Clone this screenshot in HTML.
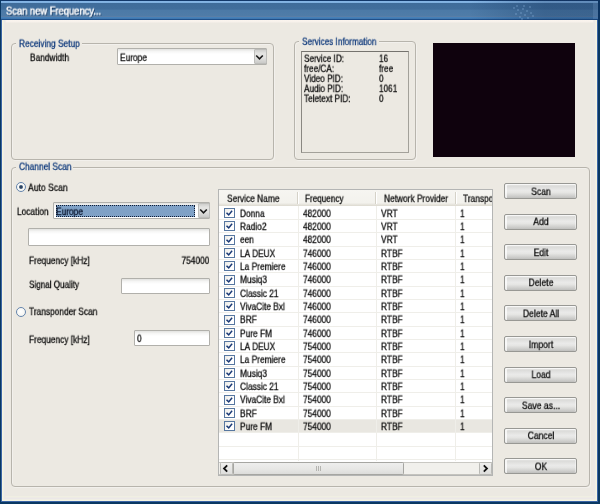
<!DOCTYPE html>
<html>
<head>
<meta charset="utf-8">
<title>Scan new Frequency...</title>
<style>
html,body{margin:0;padding:0;}
body{width:600px;height:504px;overflow:hidden;background:#ece9e2;font-family:"Liberation Sans",sans-serif;font-size:10px;color:#0c0c0c;position:relative;}
.abs,.t,.gb,.gl,.inp,.btn,.cb,.radio{position:absolute;box-sizing:border-box;}
.t{white-space:nowrap;line-height:12px;height:12px;font-size:10.0px;transform:scale(0.8350,0.93);will-change:transform;-webkit-text-stroke:0.3px currentColor;}
.gl{color:#0f3a7c;}
#frame{position:absolute;left:0;top:0;width:600px;height:504px;background:#0a3862;}
#frame2{position:absolute;left:1px;top:20px;width:597.3px;height:482.4px;background:#3b65a5;}
#titlebar{position:absolute;left:0;top:0;width:600px;height:20px;background:linear-gradient(to right,rgba(12,40,80,0) 0,rgba(12,40,80,0) 470px,rgba(12,40,80,0.28) 545px,rgba(12,40,80,0.28) 600px),linear-gradient(to bottom,#12386a 0,#12386a 0.8px,#86b6e6 1.1px,#7fb0e0 2.6px,#3f6c9a 3.3px,#416e9c 9px,#4c7aa7 10.5px,#4f7ca8 15.8px,#5a7ea6 16.5px,#4680b8 17.3px,#4680b8 18.4px,#20508a 19px,#20508a 20px);}
#tl{position:absolute;left:0;top:0;width:1.2px;height:20px;background:#0a3862;}
#tr{position:absolute;left:598.2px;top:0;width:1.8px;height:20px;background:#0a3260;}
#title{position:absolute;left:5.6px;top:5.6px;color:#fff;font-size:10px;font-weight:normal;-webkit-text-stroke:0.45px #fff;line-height:12px;white-space:nowrap;text-shadow:1px 1px 0 #102c52;transform:scale(0.936,1.04);transform-origin:0 9.5px;will-change:transform;}
#client{position:absolute;left:2.2px;top:20px;width:595.1px;height:481.4px;background:linear-gradient(to bottom,#faf4ee 0,#f7f1eb 2px,#ece9e2 3px);box-shadow:inset 1.6px 0 0 #f5f4e0,inset -1.6px 0 0 #f5f4e0,inset 0 -1.5px 0 #f5f4e2,inset 3.6px 0 0 #ebe8e7,inset -3.6px 0 0 #ebe8e7,inset 0 -3.5px 0 #ebe8e8,inset 0 -5px 0 #f0efe2;}
.gb{border:1px solid #b7b4ac;border-radius:4px;box-shadow:inset 1px 1px 0 rgba(255,255,255,.35),1px 1px 0 rgba(255,255,255,.35);}
.mask{background:#ece9e2;}
.inp{background:linear-gradient(to bottom,#e2e2e0 0,#f6f6f5 2.5px,#fff 5px);border:1px solid #b1b0ab;border-radius:1px;}
.btn{width:73px;height:16px;border:1px solid #989894;border-radius:2px;background:linear-gradient(to bottom,#e8e8e6 0,#dcdcda 16%,#eaeae9 45%,#e6e6e4 60%,#cfcfcd 85%,#bfbfbd 100%);box-shadow:inset 2px 1px 0 rgba(255,255,255,.7),inset -1px 0 0 rgba(255,255,255,.4);}
.radio{width:10px;height:10px;border-radius:50%;border:1.2px solid #6585ad;background:radial-gradient(circle at 45% 45%,#fff 0,#f6f6f3 60%,#e6e6e0 100%);}
.cb{width:10.6px;height:9.8px;border:1px solid #5777a0;background:linear-gradient(135deg,#ecebe6 0,#fff 65%);}
</style>
</head>
<body>
<div id="frame"></div>
<div id="frame2"></div>
<div id="titlebar"></div><div id="tl"></div><div id="tr"></div>
<div id="title">Scan new Frequency...</div>
<div id="client"></div>

<div class="abs" style="left:513px;top:7px;width:2px;height:2px;background:rgba(160,200,240,0.22);"></div>
<div class="abs" style="left:516px;top:5px;width:2px;height:2px;background:rgba(160,200,240,0.22);"></div>
<div class="abs" style="left:517px;top:9px;width:2px;height:2px;background:rgba(160,200,240,0.22);"></div>
<div class="abs" style="left:520px;top:12px;width:2px;height:2px;background:rgba(160,200,240,0.22);"></div>
<div class="abs" style="left:519px;top:16px;width:2px;height:2px;background:rgba(160,200,240,0.22);"></div>
<div class="abs" style="left:522px;top:8px;width:2px;height:2px;background:rgba(160,200,240,0.22);"></div>
<div class="abs" style="left:524px;top:14px;width:2px;height:2px;background:rgba(160,200,240,0.22);"></div>
<div class="abs" style="left:526px;top:10px;width:2px;height:2px;background:rgba(160,200,240,0.22);"></div>
<div class="abs" style="left:527px;top:17px;width:2px;height:2px;background:rgba(160,200,240,0.22);"></div>
<div class="abs" style="left:529px;top:6px;width:2px;height:2px;background:rgba(160,200,240,0.22);"></div>
<div class="abs" style="left:530px;top:12px;width:2px;height:2px;background:rgba(160,200,240,0.22);"></div>
<div class="abs" style="left:532px;top:15px;width:2px;height:2px;background:rgba(160,200,240,0.22);"></div>
<div class="abs" style="left:523px;top:5px;width:2px;height:2px;background:rgba(160,200,240,0.22);"></div>
<div class="abs" style="left:515px;top:13px;width:2px;height:2px;background:rgba(160,200,240,0.22);"></div>
<div class="abs" style="left:521px;top:18px;width:2px;height:2px;background:rgba(160,200,240,0.22);"></div>
<div class="abs" style="left:592.6px;top:3px;width:5.199999999999932px;height:16px;background:rgba(130,170,215,0.22);"></div>
<div class="gb" style="left:11.4px;top:43.4px;width:262.5px;height:117.1px;"></div>
<div class="abs mask" style="left:16px;top:40px;width:66px;height:10px;"></div>
<div class="t gl" style="top:37.50px;left:18.5px;transform-origin:0 9.5px;transform:scale(0.8350,0.93);">Receiving Setup</div>
<div class="t" style="top:51.50px;left:30px;transform-origin:0 9.5px;transform:scale(0.8350,0.93);">Bandwidth</div>
<div class="inp" style="left:117px;top:48.3px;width:150px;height:16.299999999999997px;"></div>
<div class="t" style="top:51.50px;left:120.0px;transform-origin:0 9.5px;transform:scale(0.8350,0.93);">Europe</div>
<div class="abs" style="left:253.5px;top:48.6px;width:13.300000000000011px;height:15.800000000000004px;background:linear-gradient(to bottom,#cfcfcd 0,#e4e4e2 25%,#e2e2e0 60%,#cacac8 100%);border:1px solid #bdbdba;border-radius:1px;"></div>
<svg class="abs" style="left:255.3px;top:53.6px" width="9" height="7" viewBox="0 0 9 7"><path d="M1.2 1.5 L4.5 4.8 L7.8 1.5" fill="none" stroke="#1a1a1a" stroke-width="1.6"/></svg>
<div class="gb" style="left:294px;top:41.3px;width:121.60000000000002px;height:119.2px;"></div>
<div class="abs mask" style="left:299px;top:37px;width:80px;height:11px;"></div>
<div class="t gl" style="top:36.20px;left:302px;transform-origin:0 9.5px;transform:scale(0.8170,0.93);">Services Information</div>
<div class="abs" style="left:301px;top:51px;width:108px;height:101.6px;border:1px solid #a3a19a;border-top-color:#75736e;border-left-color:#8a8882;"></div>
<div class="t" style="top:52.50px;left:303.5px;transform-origin:0 9.5px;transform:scale(0.8200,0.93);">Service ID:</div>
<div class="t" style="top:52.50px;left:379.2px;transform-origin:0 9.5px;transform:scale(0.8200,0.93);">16</div>
<div class="t" style="top:62.50px;left:303.5px;transform-origin:0 9.5px;transform:scale(0.8200,0.93);">free/CA:</div>
<div class="t" style="top:62.50px;left:379.2px;transform-origin:0 9.5px;transform:scale(0.8200,0.93);">free</div>
<div class="t" style="top:72.50px;left:303.5px;transform-origin:0 9.5px;transform:scale(0.8200,0.93);">Video PID:</div>
<div class="t" style="top:72.50px;left:379.2px;transform-origin:0 9.5px;transform:scale(0.8200,0.93);">0</div>
<div class="t" style="top:82.50px;left:303.5px;transform-origin:0 9.5px;transform:scale(0.8200,0.93);">Audio PID:</div>
<div class="t" style="top:82.50px;left:379.2px;transform-origin:0 9.5px;transform:scale(0.8200,0.93);">1061</div>
<div class="t" style="top:92.50px;left:303.5px;transform-origin:0 9.5px;transform:scale(0.8200,0.93);">Teletext PID:</div>
<div class="t" style="top:92.50px;left:379.2px;transform-origin:0 9.5px;transform:scale(0.8200,0.93);">0</div>
<div class="abs" style="left:433px;top:43px;width:142px;height:114px;background:#0f020d;"></div>
<div class="gb" style="left:11.3px;top:167px;width:579.2px;height:319.5px;"></div>
<div class="abs mask" style="left:16px;top:162px;width:57px;height:11px;"></div>
<div class="t gl" style="top:161.00px;left:18.7px;transform-origin:0 9.5px;transform:scale(0.8350,0.93);">Channel Scan</div>
<div class="radio" style="left:15.7px;top:182.1px;width:10.0px;height:10.0px;"></div>
<div class="abs" style="left:18.7px;top:185.1px;width:4.0px;height:4.0px;border-radius:50%;background:radial-gradient(circle,#2c4462 35%,#5f7896 100%);"></div>
<div class="t" style="top:181.50px;left:28.2px;transform-origin:0 9.5px;transform:scale(0.8600,0.93);">Auto Scan</div>
<div class="t" style="top:205.50px;left:16.8px;transform-origin:0 9.5px;transform:scale(0.8350,0.93);">Location</div>
<div class="inp" style="left:53.3px;top:202.4px;width:156.7px;height:16.19999999999999px;"></div>
<div class="abs" style="left:55.6px;top:204.5px;width:139.70000000000002px;height:12.199999999999989px;background:#7fa1c6;border:1px dotted #101c34;"></div>
<div class="t" style="top:205.50px;left:56.2px;transform-origin:0 9.5px;transform:scale(0.8350,0.93);color:#07122a;">Europe</div>
<div class="abs" style="left:197.8px;top:202.7px;width:11.799999999999983px;height:15.600000000000023px;background:linear-gradient(to bottom,#cfcfcd 0,#e4e4e2 25%,#e2e2e0 60%,#cacac8 100%);border:1px solid #bdbdba;border-radius:1px;"></div>
<svg class="abs" style="left:199px;top:207.6px" width="9" height="7" viewBox="0 0 9 7"><path d="M1.2 1.5 L4.5 4.8 L7.8 1.5" fill="none" stroke="#1a1a1a" stroke-width="1.6"/></svg>
<div class="inp" style="left:28px;top:228px;width:182px;height:18px;"></div>
<div class="t" style="top:254.50px;left:28.7px;transform-origin:0 9.5px;transform:scale(0.8350,0.93);">Frequency [kHz]</div>
<div class="t" style="top:254.50px;right:390.5px;transform-origin:100% 9.5px;transform:scale(0.8350,0.93);">754000</div>
<div class="t" style="top:278.50px;left:28.7px;transform-origin:0 9.5px;transform:scale(0.8100,0.93);">Signal Quality</div>
<div class="inp" style="left:121px;top:278px;width:89px;height:16px;"></div>
<div class="radio" style="left:15.7px;top:307px;width:10.0px;height:10px;"></div>
<div class="t" style="top:306.20px;left:28.7px;transform-origin:0 9.5px;transform:scale(0.8350,0.93);">Transponder Scan</div>
<div class="t" style="top:333.80px;left:28.7px;transform-origin:0 9.5px;transform:scale(0.8350,0.93);">Frequency [kHz]</div>
<div class="inp" style="left:134px;top:330px;width:76px;height:16px;"></div>
<div class="t" style="top:332.50px;left:137px;transform-origin:0 9.5px;transform:scale(0.8350,0.93);">0</div>
<div class="abs" style="left:218px;top:189px;width:275px;height:287px;background:#fff;border:1px solid #b4b5b4;"></div>
<div class="abs" style="left:219px;top:190px;width:273px;height:16px;background:linear-gradient(to bottom,#f6f5f1 0,#f3f2ed 80%,#dcd9cf 100%);"></div>
<div class="abs" style="left:297px;top:192px;width:1px;height:12px;background:#d5d2c8;"></div>
<div class="abs" style="left:298px;top:192px;width:1px;height:12px;background:#fff;"></div>
<div class="abs" style="left:375px;top:192px;width:1px;height:12px;background:#d5d2c8;"></div>
<div class="abs" style="left:376px;top:192px;width:1px;height:12px;background:#fff;"></div>
<div class="abs" style="left:455px;top:192px;width:1px;height:12px;background:#d5d2c8;"></div>
<div class="abs" style="left:456px;top:192px;width:1px;height:12px;background:#fff;"></div>
<div class="t" style="top:192.50px;left:227px;transform-origin:0 9.5px;transform:scale(0.8350,0.93);">Service Name</div>
<div class="t" style="top:192.50px;left:305.3px;transform-origin:0 9.5px;transform:scale(0.8150,0.93);">Frequency</div>
<div class="t" style="top:192.50px;left:383.7px;transform-origin:0 9.5px;transform:scale(0.8350,0.93);">Network Provider</div>
<div class="abs" style="left:455px;top:190px;width:37px;height:16px;overflow:hidden;background:none;"></div>
<div class="abs" style="left:456px;top:190px;width:36px;height:16px;overflow:hidden;"><div class="t" style="left:6.5px;top:2.5px;transform-origin:0 9.5px;">Transponder</div></div>
<div class="abs" style="left:219px;top:420px;width:273px;height:13px;background:#e9e7e1;"></div>
<div class="abs" style="left:219px;top:219.08px;width:273px;height:1px;background:#efeee9;"></div>
<div class="abs" style="left:219px;top:232.42px;width:273px;height:1px;background:#efeee9;"></div>
<div class="abs" style="left:219px;top:245.75px;width:273px;height:1px;background:#efeee9;"></div>
<div class="abs" style="left:219px;top:259.08px;width:273px;height:1px;background:#efeee9;"></div>
<div class="abs" style="left:219px;top:272.42px;width:273px;height:1px;background:#efeee9;"></div>
<div class="abs" style="left:219px;top:285.75px;width:273px;height:1px;background:#efeee9;"></div>
<div class="abs" style="left:219px;top:299.08px;width:273px;height:1px;background:#efeee9;"></div>
<div class="abs" style="left:219px;top:312.41px;width:273px;height:1px;background:#efeee9;"></div>
<div class="abs" style="left:219px;top:325.75px;width:273px;height:1px;background:#efeee9;"></div>
<div class="abs" style="left:219px;top:339.08px;width:273px;height:1px;background:#efeee9;"></div>
<div class="abs" style="left:219px;top:352.41px;width:273px;height:1px;background:#efeee9;"></div>
<div class="abs" style="left:219px;top:365.75px;width:273px;height:1px;background:#efeee9;"></div>
<div class="abs" style="left:219px;top:379.08px;width:273px;height:1px;background:#efeee9;"></div>
<div class="abs" style="left:219px;top:392.41px;width:273px;height:1px;background:#efeee9;"></div>
<div class="abs" style="left:219px;top:405.75px;width:273px;height:1px;background:#efeee9;"></div>
<div class="abs" style="left:219px;top:419.08px;width:273px;height:1px;background:#efeee9;"></div>
<div class="abs" style="left:219px;top:432.41px;width:273px;height:1px;background:#efeee9;"></div>
<div class="abs" style="left:219px;top:445.74px;width:273px;height:1px;background:#efeee9;"></div>
<div class="abs" style="left:219px;top:459.08px;width:273px;height:1px;background:#efeee9;"></div>
<div class="abs" style="left:297.75px;top:206px;width:1px;height:255px;background:#efeee9;"></div>
<div class="abs" style="left:375.75px;top:206px;width:1px;height:255px;background:#efeee9;"></div>
<div class="abs" style="left:455.25px;top:206px;width:1px;height:255px;background:#efeee9;"></div>
<div class="cb" style="left:224.2px;top:208.05px;"></div>
<svg class="abs" style="left:224.2px;top:208.05px" width="11" height="10" viewBox="0 0 11 10"><path d="M2.5 4.8 L4.7 6.9 L8.1 2.8" fill="none" stroke="#1b3a76" stroke-width="1.5"/></svg>
<div class="t" style="top:207.50px;left:239.6px;transform-origin:0 9.5px;transform:scale(0.8350,0.93);">Donna</div>
<div class="t" style="top:207.50px;left:303px;transform-origin:0 9.5px;transform:scale(0.8350,0.93);">482000</div>
<div class="t" style="top:207.50px;left:381.2px;transform-origin:0 9.5px;transform:scale(0.8350,0.93);">VRT</div>
<div class="t" style="top:207.50px;left:460px;transform-origin:0 9.5px;transform:scale(0.8350,0.93);">1</div>
<div class="cb" style="left:224.2px;top:221.38px;"></div>
<svg class="abs" style="left:224.2px;top:221.38px" width="11" height="10" viewBox="0 0 11 10"><path d="M2.5 4.8 L4.7 6.9 L8.1 2.8" fill="none" stroke="#1b3a76" stroke-width="1.5"/></svg>
<div class="t" style="top:220.83px;left:239.6px;transform-origin:0 9.5px;transform:scale(0.8350,0.93);">Radio2</div>
<div class="t" style="top:220.83px;left:303px;transform-origin:0 9.5px;transform:scale(0.8350,0.93);">482000</div>
<div class="t" style="top:220.83px;left:381.2px;transform-origin:0 9.5px;transform:scale(0.8350,0.93);">VRT</div>
<div class="t" style="top:220.83px;left:460px;transform-origin:0 9.5px;transform:scale(0.8350,0.93);">1</div>
<div class="cb" style="left:224.2px;top:234.72px;"></div>
<svg class="abs" style="left:224.2px;top:234.72px" width="11" height="10" viewBox="0 0 11 10"><path d="M2.5 4.8 L4.7 6.9 L8.1 2.8" fill="none" stroke="#1b3a76" stroke-width="1.5"/></svg>
<div class="t" style="top:234.17px;left:239.6px;transform-origin:0 9.5px;transform:scale(0.8350,0.93);">een</div>
<div class="t" style="top:234.17px;left:303px;transform-origin:0 9.5px;transform:scale(0.8350,0.93);">482000</div>
<div class="t" style="top:234.17px;left:381.2px;transform-origin:0 9.5px;transform:scale(0.8350,0.93);">VRT</div>
<div class="t" style="top:234.17px;left:460px;transform-origin:0 9.5px;transform:scale(0.8350,0.93);">1</div>
<div class="cb" style="left:224.2px;top:248.05px;"></div>
<svg class="abs" style="left:224.2px;top:248.05px" width="11" height="10" viewBox="0 0 11 10"><path d="M2.5 4.8 L4.7 6.9 L8.1 2.8" fill="none" stroke="#1b3a76" stroke-width="1.5"/></svg>
<div class="t" style="top:247.50px;left:239.6px;transform-origin:0 9.5px;transform:scale(0.8350,0.93);">LA DEUX</div>
<div class="t" style="top:247.50px;left:303px;transform-origin:0 9.5px;transform:scale(0.8350,0.93);">746000</div>
<div class="t" style="top:247.50px;left:381.2px;transform-origin:0 9.5px;transform:scale(0.8350,0.93);">RTBF</div>
<div class="t" style="top:247.50px;left:460px;transform-origin:0 9.5px;transform:scale(0.8350,0.93);">1</div>
<div class="cb" style="left:224.2px;top:261.38px;"></div>
<svg class="abs" style="left:224.2px;top:261.38px" width="11" height="10" viewBox="0 0 11 10"><path d="M2.5 4.8 L4.7 6.9 L8.1 2.8" fill="none" stroke="#1b3a76" stroke-width="1.5"/></svg>
<div class="t" style="top:260.83px;left:239.6px;transform-origin:0 9.5px;transform:scale(0.8350,0.93);">La Premiere</div>
<div class="t" style="top:260.83px;left:303px;transform-origin:0 9.5px;transform:scale(0.8350,0.93);">746000</div>
<div class="t" style="top:260.83px;left:381.2px;transform-origin:0 9.5px;transform:scale(0.8350,0.93);">RTBF</div>
<div class="t" style="top:260.83px;left:460px;transform-origin:0 9.5px;transform:scale(0.8350,0.93);">1</div>
<div class="cb" style="left:224.2px;top:274.72px;"></div>
<svg class="abs" style="left:224.2px;top:274.72px" width="11" height="10" viewBox="0 0 11 10"><path d="M2.5 4.8 L4.7 6.9 L8.1 2.8" fill="none" stroke="#1b3a76" stroke-width="1.5"/></svg>
<div class="t" style="top:274.17px;left:239.6px;transform-origin:0 9.5px;transform:scale(0.8350,0.93);">Musiq3</div>
<div class="t" style="top:274.17px;left:303px;transform-origin:0 9.5px;transform:scale(0.8350,0.93);">746000</div>
<div class="t" style="top:274.17px;left:381.2px;transform-origin:0 9.5px;transform:scale(0.8350,0.93);">RTBF</div>
<div class="t" style="top:274.17px;left:460px;transform-origin:0 9.5px;transform:scale(0.8350,0.93);">1</div>
<div class="cb" style="left:224.2px;top:288.05px;"></div>
<svg class="abs" style="left:224.2px;top:288.05px" width="11" height="10" viewBox="0 0 11 10"><path d="M2.5 4.8 L4.7 6.9 L8.1 2.8" fill="none" stroke="#1b3a76" stroke-width="1.5"/></svg>
<div class="t" style="top:287.50px;left:239.6px;transform-origin:0 9.5px;transform:scale(0.8350,0.93);">Classic 21</div>
<div class="t" style="top:287.50px;left:303px;transform-origin:0 9.5px;transform:scale(0.8350,0.93);">746000</div>
<div class="t" style="top:287.50px;left:381.2px;transform-origin:0 9.5px;transform:scale(0.8350,0.93);">RTBF</div>
<div class="t" style="top:287.50px;left:460px;transform-origin:0 9.5px;transform:scale(0.8350,0.93);">1</div>
<div class="cb" style="left:224.2px;top:301.38px;"></div>
<svg class="abs" style="left:224.2px;top:301.38px" width="11" height="10" viewBox="0 0 11 10"><path d="M2.5 4.8 L4.7 6.9 L8.1 2.8" fill="none" stroke="#1b3a76" stroke-width="1.5"/></svg>
<div class="t" style="top:300.83px;left:239.6px;transform-origin:0 9.5px;transform:scale(0.8350,0.93);">VivaCite Bxl</div>
<div class="t" style="top:300.83px;left:303px;transform-origin:0 9.5px;transform:scale(0.8350,0.93);">746000</div>
<div class="t" style="top:300.83px;left:381.2px;transform-origin:0 9.5px;transform:scale(0.8350,0.93);">RTBF</div>
<div class="t" style="top:300.83px;left:460px;transform-origin:0 9.5px;transform:scale(0.8350,0.93);">1</div>
<div class="cb" style="left:224.2px;top:314.71px;"></div>
<svg class="abs" style="left:224.2px;top:314.71px" width="11" height="10" viewBox="0 0 11 10"><path d="M2.5 4.8 L4.7 6.9 L8.1 2.8" fill="none" stroke="#1b3a76" stroke-width="1.5"/></svg>
<div class="t" style="top:314.16px;left:239.6px;transform-origin:0 9.5px;transform:scale(0.8350,0.93);">BRF</div>
<div class="t" style="top:314.16px;left:303px;transform-origin:0 9.5px;transform:scale(0.8350,0.93);">746000</div>
<div class="t" style="top:314.16px;left:381.2px;transform-origin:0 9.5px;transform:scale(0.8350,0.93);">RTBF</div>
<div class="t" style="top:314.16px;left:460px;transform-origin:0 9.5px;transform:scale(0.8350,0.93);">1</div>
<div class="cb" style="left:224.2px;top:328.05px;"></div>
<svg class="abs" style="left:224.2px;top:328.05px" width="11" height="10" viewBox="0 0 11 10"><path d="M2.5 4.8 L4.7 6.9 L8.1 2.8" fill="none" stroke="#1b3a76" stroke-width="1.5"/></svg>
<div class="t" style="top:327.50px;left:239.6px;transform-origin:0 9.5px;transform:scale(0.8350,0.93);">Pure FM</div>
<div class="t" style="top:327.50px;left:303px;transform-origin:0 9.5px;transform:scale(0.8350,0.93);">746000</div>
<div class="t" style="top:327.50px;left:381.2px;transform-origin:0 9.5px;transform:scale(0.8350,0.93);">RTBF</div>
<div class="t" style="top:327.50px;left:460px;transform-origin:0 9.5px;transform:scale(0.8350,0.93);">1</div>
<div class="cb" style="left:224.2px;top:341.38px;"></div>
<svg class="abs" style="left:224.2px;top:341.38px" width="11" height="10" viewBox="0 0 11 10"><path d="M2.5 4.8 L4.7 6.9 L8.1 2.8" fill="none" stroke="#1b3a76" stroke-width="1.5"/></svg>
<div class="t" style="top:340.83px;left:239.6px;transform-origin:0 9.5px;transform:scale(0.8350,0.93);">LA DEUX</div>
<div class="t" style="top:340.83px;left:303px;transform-origin:0 9.5px;transform:scale(0.8350,0.93);">754000</div>
<div class="t" style="top:340.83px;left:381.2px;transform-origin:0 9.5px;transform:scale(0.8350,0.93);">RTBF</div>
<div class="t" style="top:340.83px;left:460px;transform-origin:0 9.5px;transform:scale(0.8350,0.93);">1</div>
<div class="cb" style="left:224.2px;top:354.71px;"></div>
<svg class="abs" style="left:224.2px;top:354.71px" width="11" height="10" viewBox="0 0 11 10"><path d="M2.5 4.8 L4.7 6.9 L8.1 2.8" fill="none" stroke="#1b3a76" stroke-width="1.5"/></svg>
<div class="t" style="top:354.16px;left:239.6px;transform-origin:0 9.5px;transform:scale(0.8350,0.93);">La Premiere</div>
<div class="t" style="top:354.16px;left:303px;transform-origin:0 9.5px;transform:scale(0.8350,0.93);">754000</div>
<div class="t" style="top:354.16px;left:381.2px;transform-origin:0 9.5px;transform:scale(0.8350,0.93);">RTBF</div>
<div class="t" style="top:354.16px;left:460px;transform-origin:0 9.5px;transform:scale(0.8350,0.93);">1</div>
<div class="cb" style="left:224.2px;top:368.05px;"></div>
<svg class="abs" style="left:224.2px;top:368.05px" width="11" height="10" viewBox="0 0 11 10"><path d="M2.5 4.8 L4.7 6.9 L8.1 2.8" fill="none" stroke="#1b3a76" stroke-width="1.5"/></svg>
<div class="t" style="top:367.50px;left:239.6px;transform-origin:0 9.5px;transform:scale(0.8350,0.93);">Musiq3</div>
<div class="t" style="top:367.50px;left:303px;transform-origin:0 9.5px;transform:scale(0.8350,0.93);">754000</div>
<div class="t" style="top:367.50px;left:381.2px;transform-origin:0 9.5px;transform:scale(0.8350,0.93);">RTBF</div>
<div class="t" style="top:367.50px;left:460px;transform-origin:0 9.5px;transform:scale(0.8350,0.93);">1</div>
<div class="cb" style="left:224.2px;top:381.38px;"></div>
<svg class="abs" style="left:224.2px;top:381.38px" width="11" height="10" viewBox="0 0 11 10"><path d="M2.5 4.8 L4.7 6.9 L8.1 2.8" fill="none" stroke="#1b3a76" stroke-width="1.5"/></svg>
<div class="t" style="top:380.83px;left:239.6px;transform-origin:0 9.5px;transform:scale(0.8350,0.93);">Classic 21</div>
<div class="t" style="top:380.83px;left:303px;transform-origin:0 9.5px;transform:scale(0.8350,0.93);">754000</div>
<div class="t" style="top:380.83px;left:381.2px;transform-origin:0 9.5px;transform:scale(0.8350,0.93);">RTBF</div>
<div class="t" style="top:380.83px;left:460px;transform-origin:0 9.5px;transform:scale(0.8350,0.93);">1</div>
<div class="cb" style="left:224.2px;top:394.71px;"></div>
<svg class="abs" style="left:224.2px;top:394.71px" width="11" height="10" viewBox="0 0 11 10"><path d="M2.5 4.8 L4.7 6.9 L8.1 2.8" fill="none" stroke="#1b3a76" stroke-width="1.5"/></svg>
<div class="t" style="top:394.16px;left:239.6px;transform-origin:0 9.5px;transform:scale(0.8350,0.93);">VivaCite Bxl</div>
<div class="t" style="top:394.16px;left:303px;transform-origin:0 9.5px;transform:scale(0.8350,0.93);">754000</div>
<div class="t" style="top:394.16px;left:381.2px;transform-origin:0 9.5px;transform:scale(0.8350,0.93);">RTBF</div>
<div class="t" style="top:394.16px;left:460px;transform-origin:0 9.5px;transform:scale(0.8350,0.93);">1</div>
<div class="cb" style="left:224.2px;top:408.05px;"></div>
<svg class="abs" style="left:224.2px;top:408.05px" width="11" height="10" viewBox="0 0 11 10"><path d="M2.5 4.8 L4.7 6.9 L8.1 2.8" fill="none" stroke="#1b3a76" stroke-width="1.5"/></svg>
<div class="t" style="top:407.50px;left:239.6px;transform-origin:0 9.5px;transform:scale(0.8350,0.93);">BRF</div>
<div class="t" style="top:407.50px;left:303px;transform-origin:0 9.5px;transform:scale(0.8350,0.93);">754000</div>
<div class="t" style="top:407.50px;left:381.2px;transform-origin:0 9.5px;transform:scale(0.8350,0.93);">RTBF</div>
<div class="t" style="top:407.50px;left:460px;transform-origin:0 9.5px;transform:scale(0.8350,0.93);">1</div>
<div class="cb" style="left:224.2px;top:421.38px;"></div>
<svg class="abs" style="left:224.2px;top:421.38px" width="11" height="10" viewBox="0 0 11 10"><path d="M2.5 4.8 L4.7 6.9 L8.1 2.8" fill="none" stroke="#1b3a76" stroke-width="1.5"/></svg>
<div class="t" style="top:420.83px;left:239.6px;transform-origin:0 9.5px;transform:scale(0.8350,0.93);">Pure FM</div>
<div class="t" style="top:420.83px;left:303px;transform-origin:0 9.5px;transform:scale(0.8350,0.93);">754000</div>
<div class="t" style="top:420.83px;left:381.2px;transform-origin:0 9.5px;transform:scale(0.8350,0.93);">RTBF</div>
<div class="t" style="top:420.83px;left:460px;transform-origin:0 9.5px;transform:scale(0.8350,0.93);">1</div>
<div class="abs" style="left:219px;top:461.6px;width:273px;height:13.399999999999977px;background:#f1f0ec;border-top:1px solid #c9c8c3;border-bottom:1px solid #c4c3be;"></div>
<div class="abs" style="left:219.5px;top:462px;width:13.300000000000011px;height:12.600000000000023px;background:linear-gradient(to bottom,#efefee,#dededc);border:1px solid #b9b9b5;border-radius:1.5px;"></div>
<div class="abs" style="left:479.3px;top:462px;width:12.300000000000011px;height:12.600000000000023px;background:linear-gradient(to bottom,#efefee,#dededc);border:1px solid #b9b9b5;border-radius:1.5px;"></div>
<div class="abs" style="left:233px;top:462px;width:170.60000000000002px;height:12.600000000000023px;background:linear-gradient(to bottom,#eeeeed,#e6e6e4 60%,#dcdcda);border:1px solid #a6a6a2;border-radius:1.5px;"></div>
<svg class="abs" style="left:221.8px;top:463.8px" width="7" height="9" viewBox="0 0 7 9"><path d="M5.2 1.3 L2 4.5 L5.2 7.7" fill="none" stroke="#111" stroke-width="1.8"/></svg>
<svg class="abs" style="left:482px;top:463.8px" width="7" height="9" viewBox="0 0 7 9"><path d="M1.8 1.3 L5 4.5 L1.8 7.7" fill="none" stroke="#111" stroke-width="1.8"/></svg>
<div class="abs" style="left:316px;top:466px;width:1px;height:5px;background:#b4b4b0;"></div>
<div class="abs" style="left:318px;top:466px;width:1px;height:5px;background:#b4b4b0;"></div>
<div class="abs" style="left:320px;top:466px;width:1px;height:5px;background:#b4b4b0;"></div>
<div class="btn" style="left:504px;top:183.0px;"></div>
<div class="t" style="top:185.50px;left:440.70000000000005px;width:200px;text-align:center;transform-origin:50% 9.5px;transform:scale(0.8600,0.93);">Scan</div>
<div class="btn" style="left:504px;top:213.6px;"></div>
<div class="t" style="top:216.10px;left:440.70000000000005px;width:200px;text-align:center;transform-origin:50% 9.5px;transform:scale(0.8600,0.93);">Add</div>
<div class="btn" style="left:504px;top:244.2px;"></div>
<div class="t" style="top:246.70px;left:440.70000000000005px;width:200px;text-align:center;transform-origin:50% 9.5px;transform:scale(0.8600,0.93);">Edit</div>
<div class="btn" style="left:504px;top:274.8px;"></div>
<div class="t" style="top:277.30px;left:440.70000000000005px;width:200px;text-align:center;transform-origin:50% 9.5px;transform:scale(0.8600,0.93);">Delete</div>
<div class="btn" style="left:504px;top:305.4px;"></div>
<div class="t" style="top:307.90px;left:440.70000000000005px;width:200px;text-align:center;transform-origin:50% 9.5px;transform:scale(0.8600,0.93);">Delete All</div>
<div class="btn" style="left:504px;top:336.0px;"></div>
<div class="t" style="top:338.50px;left:440.70000000000005px;width:200px;text-align:center;transform-origin:50% 9.5px;transform:scale(0.8600,0.93);">Import</div>
<div class="btn" style="left:504px;top:366.6px;"></div>
<div class="t" style="top:369.10px;left:440.70000000000005px;width:200px;text-align:center;transform-origin:50% 9.5px;transform:scale(0.8600,0.93);">Load</div>
<div class="btn" style="left:504px;top:397.2px;"></div>
<div class="t" style="top:399.70px;left:440.70000000000005px;width:200px;text-align:center;transform-origin:50% 9.5px;transform:scale(0.8600,0.93);">Save as...</div>
<div class="btn" style="left:504px;top:427.8px;"></div>
<div class="t" style="top:430.30px;left:440.70000000000005px;width:200px;text-align:center;transform-origin:50% 9.5px;transform:scale(0.8600,0.93);">Cancel</div>
<div class="btn" style="left:504px;top:458.4px;"></div>
<div class="t" style="top:460.90px;left:440.70000000000005px;width:200px;text-align:center;transform-origin:50% 9.5px;transform:scale(0.8600,0.93);">OK</div>
</body>
</html>
